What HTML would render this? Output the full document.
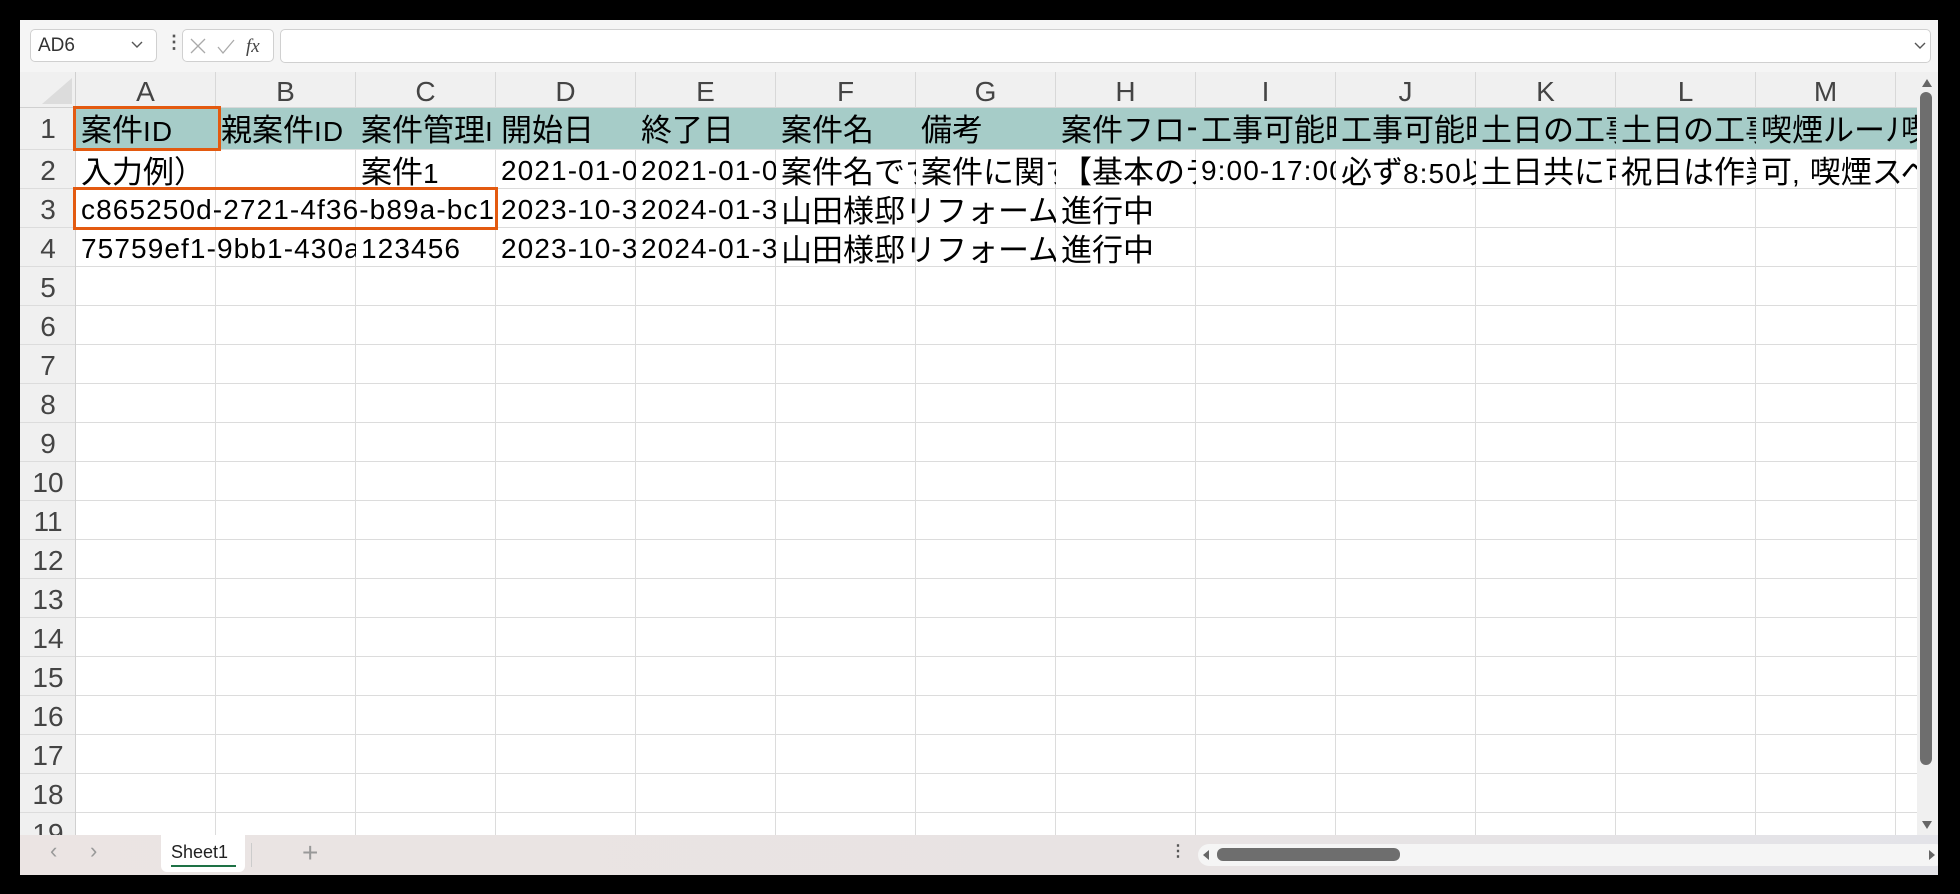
<!DOCTYPE html>
<html><head><meta charset="utf-8"><style>
*{margin:0;padding:0;box-sizing:border-box}
body{width:1960px;height:894px;background:#000;position:relative;overflow:hidden;font-family:"Liberation Sans","Noto Sans CJK JP",sans-serif}
#win{position:absolute;left:20px;top:20px;width:1918px;height:855px;background:#f5f5f5;overflow:hidden}
.abs{position:absolute}
.box{position:absolute;background:#fff;border:1px solid #d0d0d0;border-radius:5px}
#grid{position:absolute;left:56px;top:91px;width:1841px;height:724px;background-color:#fff;
background-image:repeating-linear-gradient(to right,transparent 0 139px,#dcdcdc 139px 140px),repeating-linear-gradient(to bottom,transparent 0 38px,#dcdcdc 38px 39px);}
#colh{position:absolute;left:56px;top:52px;width:1841px;height:36px;background:#f0f0f0;border-bottom:1px solid #d8d8d8}
#colh div{position:absolute;top:0;width:140px;height:36px;border-right:1px solid #d8d8d8;text-align:center;font-size:28px;line-height:40px;color:#444}
#rowh{position:absolute;left:0;top:88px;width:56px;height:727px;background:#f0f0f0;border-right:1px solid #d0d0d0;overflow:hidden}
#rowh div{position:absolute;left:0;width:56px;height:39px;border-bottom:1px solid #dcdcdc;text-align:center;font-size:28px;line-height:42px;color:#444}
.c{position:absolute;height:39px;overflow:hidden;white-space:nowrap;font-size:31px;line-height:40px;padding-left:5px;color:#000;font-family:"Noto Sans CJK JP",sans-serif}
.m{font-family:"Liberation Sans",sans-serif;font-size:28px;letter-spacing:1.1px}
.c.m{line-height:41px}
.teal{position:absolute;left:56px;top:88px;width:1841px;height:41px;background:#a6ccc8}
.hl{position:absolute;border:3px solid #e35a10}
</style></head><body>
<div id="win">
 <div class="box" style="left:10px;top:9px;width:127px;height:33px"></div>
 <div class="abs" style="left:18px;top:13px;font-size:19px;color:#333;line-height:26px">AD6</div>
 <svg class="abs" style="left:110px;top:20px" width="14" height="10"><path d="M2 2 L7 7 L12 2" fill="none" stroke="#555" stroke-width="1.4"/></svg>
 <div class="abs" style="left:145px;top:12px;font-size:18px;color:#555;font-weight:bold">⋮</div>
 <div class="box" style="left:162px;top:9px;width:92px;height:33px"></div>
 <svg class="abs" style="left:168px;top:16px" width="80" height="22"><path d="M3 3 L17 17 M17 3 L3 17" stroke="#aaa" stroke-width="1.3"/><path d="M30 11 L35 17 L46 4" fill="none" stroke="#aaa" stroke-width="1.3"/><text x="58" y="16" font-family="Liberation Serif" font-style="italic" font-size="19" fill="#444">fx</text></svg>
 <div class="box" style="left:260px;top:9px;width:1651px;height:34px"></div>
 <svg class="abs" style="left:1893px;top:21px" width="14" height="10"><path d="M2 2 L7 7 L12 2" fill="none" stroke="#555" stroke-width="1.4"/></svg>

 <div id="colh">
  <div style="left:0">A</div><div style="left:140px">B</div><div style="left:280px">C</div><div style="left:420px">D</div><div style="left:560px">E</div><div style="left:700px">F</div><div style="left:840px">G</div><div style="left:980px">H</div><div style="left:1120px">I</div><div style="left:1260px">J</div><div style="left:1400px">K</div><div style="left:1540px">L</div><div style="left:1680px">M</div><div style="left:1820px"></div>
 </div>
 <div class="abs" style="left:0;top:52px;width:56px;height:36px;background:#f0f0f0;border-right:1px solid #d0d0d0;border-bottom:1px solid #d0d0d0"></div>
 <svg class="abs" style="left:18px;top:56px" width="36" height="30"><path d="M34 2 L34 28 L4 28 Z" fill="#dcdcdc"/></svg>

 <div id="grid"></div>
 <div class="teal"></div>
 <div id="rowh">
  <div style="top:0;height:42px">1</div><div style="top:42px">2</div><div style="top:81px">3</div><div style="top:120px">4</div><div style="top:159px">5</div><div style="top:198px">6</div><div style="top:237px">7</div><div style="top:276px">8</div><div style="top:315px">9</div><div style="top:354px">10</div><div style="top:393px">11</div><div style="top:432px">12</div><div style="top:471px">13</div><div style="top:510px">14</div><div style="top:549px">15</div><div style="top:588px">16</div><div style="top:627px">17</div><div style="top:666px">18</div><div style="top:705px">19</div>
 </div>

 <div class="c" style="left:56px;top:88px;width:140px">案件<span class="m">ID</span></div>
 <div class="c" style="left:196px;top:88px;width:140px">親案件<span class="m">ID</span></div>
 <div class="c" style="left:336px;top:88px;width:140px">案件管理<span class="m">ID</span></div>
 <div class="c" style="left:476px;top:88px;width:140px">開始日</div>
 <div class="c" style="left:616px;top:88px;width:140px">終了日</div>
 <div class="c" style="left:756px;top:88px;width:140px">案件名</div>
 <div class="c" style="left:896px;top:88px;width:140px">備考</div>
 <div class="c" style="left:1036px;top:88px;width:140px">案件フロー</div>
 <div class="c" style="left:1176px;top:88px;width:140px">工事可能時間</div>
 <div class="c" style="left:1316px;top:88px;width:140px">工事可能時間</div>
 <div class="c" style="left:1456px;top:88px;width:140px">土日の工事</div>
 <div class="c" style="left:1596px;top:88px;width:140px">土日の工事</div>
 <div class="c" style="left:1736px;top:88px;width:140px">喫煙ルール</div>
 <div class="c" style="left:1876px;top:88px;width:21px">喫</div>

 <div class="c" style="left:56px;top:130px;width:280px">入力例）</div>
 <div class="c" style="left:336px;top:130px;width:140px">案件<span class="m">1</span></div>
 <div class="c m" style="left:476px;top:130px;width:140px">2021-01-01</div>
 <div class="c m" style="left:616px;top:130px;width:140px">2021-01-01</div>
 <div class="c" style="left:756px;top:130px;width:140px">案件名です</div>
 <div class="c" style="left:896px;top:130px;width:140px">案件に関する</div>
 <div class="c" style="left:1036px;top:130px;width:140px">【基本のテ</div>
 <div class="c m" style="left:1176px;top:130px;width:140px">9:00-17:00</div>
 <div class="c" style="left:1316px;top:130px;width:140px">必ず<span class="m">8:50</span>以</div>
 <div class="c" style="left:1456px;top:130px;width:140px">土日共に可</div>
 <div class="c" style="left:1596px;top:130px;width:140px">祝日は作業</div>
 <div class="c" style="left:1736px;top:130px;width:161px">可<span class="m">, </span>喫煙スペース</div>

 <div class="c m" style="left:56px;top:169px;width:420px">c865250d-2721-4f36-b89a-bc12</div>
 <div class="c m" style="left:476px;top:169px;width:140px">2023-10-31</div>
 <div class="c m" style="left:616px;top:169px;width:140px">2024-01-31</div>
 <div class="c" style="left:756px;top:169px;width:280px">山田様邸リフォーム工事</div>
 <div class="c" style="left:1036px;top:169px;width:140px">進行中</div>

 <div class="c m" style="left:56px;top:208px;width:280px">75759ef1-9bb1-430a-b</div>
 <div class="c m" style="left:336px;top:208px;width:140px">123456</div>
 <div class="c m" style="left:476px;top:208px;width:140px">2023-10-31</div>
 <div class="c m" style="left:616px;top:208px;width:140px">2024-01-31</div>
 <div class="c" style="left:756px;top:208px;width:280px">山田様邸リフォーム工事</div>
 <div class="c" style="left:1036px;top:208px;width:140px">進行中</div>

 <div class="hl" style="left:53px;top:86px;width:148px;height:45px"></div>
 <div class="hl" style="left:53px;top:167px;width:425px;height:43px"></div>

 <div class="abs" style="left:1897px;top:52px;width:21px;height:763px;background:#f0f0f0"></div>
 <svg class="abs" style="left:1899px;top:56px" width="16" height="14"><path d="M3 11 L8 3 L13 11 Z" fill="#666"/></svg>
 <div class="abs" style="left:1900px;top:72px;width:12px;height:673px;background:#6e6e6e;border-radius:6px"></div>
 <svg class="abs" style="left:1899px;top:798px" width="16" height="14"><path d="M3 3 L8 11 L13 3 Z" fill="#666"/></svg>

 <div class="abs" style="left:0;top:815px;width:1918px;height:40px;background:linear-gradient(to right,#ebe4e3,#e8e3e3 60%,#e3e3e8)"></div>
 <div class="abs" style="left:30px;top:818px;font-size:22px;color:#999">‹</div>
 <div class="abs" style="left:70px;top:818px;font-size:22px;color:#999">›</div>
 <div class="abs" style="left:141px;top:815px;width:84px;height:37px;background:#fff;border-radius:0 0 6px 6px"></div>
 <div class="abs" style="left:151px;top:822px;font-size:18px;color:#222">Sheet1</div>
 <div class="abs" style="left:151px;top:845px;width:65px;height:2px;background:#1e7145"></div>
 <div class="abs" style="left:231px;top:823px;width:1px;height:24px;background:#ccc"></div>
 <div class="abs" style="left:282px;top:817px;font-size:28px;color:#999">+</div>
 <div class="abs" style="left:1150px;top:821px;font-size:16px;color:#555;font-weight:bold">⋮</div>
 <div class="abs" style="left:1178px;top:824px;width:748px;height:22px;background:#f5f5f5;border-radius:11px"></div>
 <svg class="abs" style="left:1180px;top:828px" width="12" height="14"><path d="M9 2 L3 7 L9 12 Z" fill="#666"/></svg>
 <div class="abs" style="left:1197px;top:828px;width:183px;height:13px;background:#6e6e6e;border-radius:6px"></div>
 <svg class="abs" style="left:1906px;top:828px" width="12" height="14"><path d="M3 2 L9 7 L3 12 Z" fill="#666"/></svg>
</div>
</body></html>
